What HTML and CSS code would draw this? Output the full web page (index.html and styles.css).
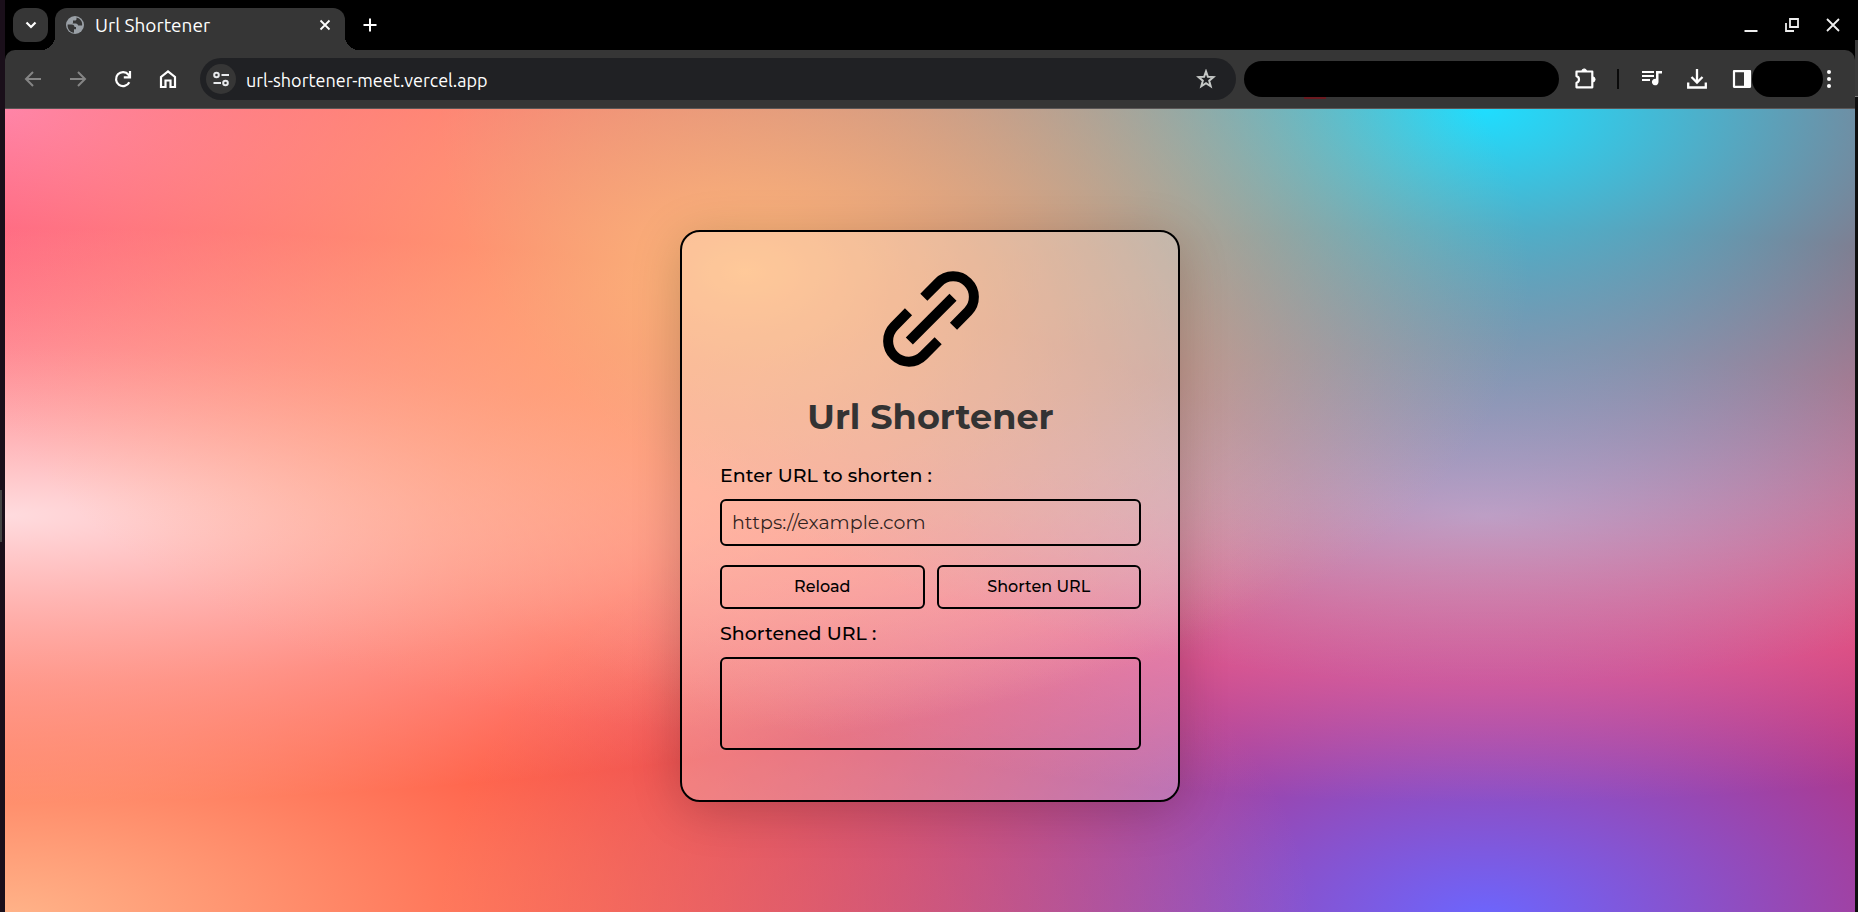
FILE: index.html
```
<!DOCTYPE html>
<html lang="en">
<head>
<meta charset="utf-8">
<title>Url Shortener</title>
<link rel="stylesheet" href="styles.css">
</head>
<body>
<div class="edge edge-left"></div>
<div class="window">
  <header class="tabstrip">
    <button class="tab-search" aria-label="Search tabs"><svg width="16" height="16" viewBox="0 0 16 16"><path d="M3.500 5.500 8 10l4.500-4.500" fill="none" stroke="#fff" stroke-width="2.200"/></svg></button>
    <div class="tab">
      <svg width="20" height="20" viewBox="0 0 20 20"><circle cx="10" cy="10" r="9" fill="#9aa0a6"/><path d="M2.600 9.500h4.200c1.800 0 2.700 1 2.700 2.500h1.500v2.200H9v3.500C5.200 17.500 2.200 14 2.600 9.500zM11.500 2.600V4c0 1-.8 1.600-1.800 1.600H8v1.800c0 .6-.5 1-1 1h3.800c1.500 0 2 1 2.400 2.200h3.900c.6-3.700-1.800-7.200-5.600-8z" fill="#363636"/></svg>
      <span class="tab-title">Url Shortener</span>
      <button class="icon" aria-label="Close tab"><svg width="16" height="16" viewBox="0 0 16 16"><path d="m3.500 3.500 9 9m0-9-9 9" stroke="#fff" stroke-width="1.800"/></svg></button>
    </div>
    <button class="icon new-tab" aria-label="New tab"><svg width="16" height="16" viewBox="0 0 16 16"><path d="M8 1.500v13M1.500 8h13" stroke="#fff" stroke-width="2"/></svg></button>
    <div class="controls">
      <button class="icon" aria-label="Minimize"><svg width="16" height="16" viewBox="0 0 16 16"><path d="M1.500 14h13" stroke="#eee" stroke-width="2"/></svg></button>
      <button class="icon" aria-label="Restore"><svg width="16" height="16" viewBox="0 0 16 16"><path d="M6 2h8v8H6zM2 6v8h8" fill="none" stroke="#eee" stroke-width="1.800"/></svg></button>
      <button class="icon" aria-label="Close window"><svg width="16" height="16" viewBox="0 0 16 16"><path d="m2 2 12 12m0-12L2 14" stroke="#eee" stroke-width="1.800"/></svg></button>
    </div>
  </header>
  <nav class="toolbar">
    <div class="nav-buttons">
      <button class="icon" aria-label="Back"><svg width="18" height="18" viewBox="0 0 18 18"><path d="M17 9H2.500M9 2 2 9l7 7" fill="none" stroke="#858585" stroke-width="2"/></svg></button>
      <button class="icon" aria-label="Forward"><svg width="18" height="18" viewBox="0 0 18 18"><path d="M1 9h14.500M9 2l7 7-7 7" fill="none" stroke="#858585" stroke-width="2"/></svg></button>
      <button class="icon" aria-label="Reload page"><svg width="18" height="18" viewBox="0 0 18 18"><path d="M15.300 12.200A7 7 0 1 1 14.500 4.700L16 6.500M16 1v6.300H9.800" fill="none" stroke="#fff" stroke-width="2.200"/></svg></button>
      <button class="icon" aria-label="Home"><svg width="18" height="20" viewBox="0 0 18 20"><path d="M2 8v10h4.500v-6.500h5V18H16V8L9 2.300z" fill="none" stroke="#fff" stroke-width="2.200"/></svg></button>
    </div>
    <div class="address">
      <button class="site-info" aria-label="Site information"><svg width="18" height="18" viewBox="0 0 18 18" fill="none" stroke="#e8eaed" stroke-width="2"><circle cx="4.500" cy="5" r="2.300"/><path d="M9.500 5H17M1.500 13H9"/><circle cx="13.500" cy="13" r="2.300"/></svg></button>
      <input class="url" type="text" aria-label="Address" value="url-shortener-meet.vercel.app">
      <button class="icon" aria-label="Bookmark"><svg width="20" height="20" viewBox="0 0 20 20"><path d="m10 2.400 1.900 5.400 5.600.3-4.300 3.600 1.500 5.600-4.700-3.100-4.700 3.100 1.500-5.600-4.300-3.600 5.600-.3z" fill="none" stroke="#c4c7c5" stroke-width="2"/></svg></button>
    </div>
    <div class="redacted extensions"></div>
    <button class="icon puzzle" aria-label="Extensions"><svg width="22" height="22" viewBox="0 0 22 22"><path d="M1.500 3.500h15.800v15.800H1.500v-4.600c3.300-1 3.300-5.600 0-6.600z" fill="none" stroke="#fff" stroke-width="2.200" stroke-linejoin="round"/><path d="M6.800 3.500a2.400 2.600 0 0 1 4.800 0zM17.500 8.800a2.600 2.600 0 0 1 0 5.200z" fill="#fff" stroke="#fff"/></svg></button>
    <span class="divider"></span>
    <div class="tools">
      <button class="icon" aria-label="Media controls"><svg width="20" height="20" viewBox="0 0 20 20"><path d="M0 3h12M0 7h12M0 11h8" stroke="#fff" stroke-width="2"/><path d="M14 2h6v2.400h-3.500V13a3.300 3.300 0 1 1-2.500-3.200z" fill="#fff"/></svg></button>
      <button class="icon" aria-label="Downloads"><svg width="20" height="20" viewBox="0 0 20 20"><path d="M10 0v13M4.500 8l5.500 5.500L15.500 8M1.200 13.500v5h17.600v-5" fill="none" stroke="#fff" stroke-width="2.300"/></svg></button>
      <button class="icon" aria-label="Side panel"><svg width="20" height="20" viewBox="0 0 20 20"><path d="M2 2.200h16v15.600H2z" fill="none" stroke="#fff" stroke-width="2.200" stroke-linejoin="round"/><path d="M12 2h6v16h-6z" fill="#fff"/></svg></button>
    </div>
    <div class="redacted profile"></div>
    <button class="icon" aria-label="Menu"><svg width="12" height="20" viewBox="0 0 12 20" fill="#fff"><circle cx="6" cy="3" r="2"/><circle cx="6" cy="10" r="2"/><circle cx="6" cy="17" r="2"/></svg></button>
  </nav>
  <main class="page">
    <form class="card">
      <svg class="logo" width="130" height="130" viewBox="15 12 390 390" fill="none" stroke="#000" stroke-width="30"><path d="M188.500 141.500 232.200 97.800A61.500 61.500 0 0 1 321 184.500L277.500 229M145 273 276 142M231.500 272.500 187.800 316.200A61.500 61.500 0 0 1 99 229.500L142.500 185"/></svg>
      <h1>Url Shortener</h1>
      <label for="long">Enter URL to shorten :</label>
      <input class="field" id="long" type="text" placeholder="https://example.com">
      <div class="actions">
        <button type="button">Reload</button>
        <button type="button">Shorten URL</button>
      </div>
      <label for="short">Shortened URL :</label>
      <output class="result" id="short"></output>
    </form>
  </main>
</div>
<div class="edge edge-right"></div>
</body>
</html>
```
FILE: styles.css
```
* { box-sizing: border-box; }

body {
  margin: 0;
  min-height: 100vh;
  display: grid;
  grid-template-columns: 5px 1fr 3px;
  background: #000;
  font-family: Ubuntu, "Noto Sans", sans-serif;
}

button, input { font: inherit; color: inherit; }
svg { display: block; }

.edge-left {
  background: linear-gradient(#444 0 0) 0 57% / 2px 52px no-repeat, #1a0f1a;
}
.edge-right {
  background: linear-gradient(transparent 40px, #3a3a3a 40px 96px, #777 96px 97px, #0e0e0e 97px);
}

.window {
  display: flex;
  flex-direction: column;
  min-width: 0;
}

.icon {
  padding: 0;
  border: 0;
  background: none;
  flex: none;
}

.tabstrip {
  display: flex;
  align-items: center;
  height: 50px;
  padding: 0 14px 0 8px;
}
.tab-search {
  width: 35px;
  height: 34px;
  display: grid;
  place-items: center;
  padding: 0;
  border: 0;
  border-radius: 12px;
  background: #363636;
}
.tab {
  position: relative;
  display: flex;
  align-items: center;
  align-self: flex-end;
  width: 290px;
  height: 42px;
  margin-left: 7px;
  padding: 0 12px 8px 10px;
  border-radius: 12px 12px 0 0;
  background: #363636;
  color: #fff;
}
.tab::before, .tab::after {
  content: "";
  position: absolute;
  bottom: 0;
  width: 14px;
  height: 14px;
}
.tab::before {
  right: 100%;
  background: radial-gradient(circle at 0 0, transparent 14px, #363636 14px);
}
.tab::after {
  left: 100%;
  background: radial-gradient(circle at 100% 0, transparent 14px, #363636 14px);
}
.tab-title {
  flex: 1;
  margin-left: 10px;
  font-size: 19px;
  line-height: 24px;
}
.new-tab { margin-left: 17px; }
.controls {
  display: flex;
  gap: 25px;
  margin-left: auto;
}

.toolbar {
  display: flex;
  align-items: center;
  height: 59px;
  padding: 0 20px 0 19px;
  border-radius: 10px 10px 0 0;
  border-bottom: 1px solid #5a5656;
  background: #363636;
}
.nav-buttons {
  display: flex;
  align-items: center;
  gap: 27px;
}
.address {
  flex: 1;
  display: flex;
  align-items: center;
  height: 42px;
  margin-left: 23px;
  padding: 0 20px 0 6px;
  border-radius: 21px;
  background: #202124;
}
.site-info {
  display: grid;
  place-items: center;
  width: 30px;
  height: 30px;
  padding: 0;
  border: 0;
  border-radius: 50%;
  background: #363636;
}
.url {
  flex: 1;
  min-width: 0;
  margin-left: 10px;
  padding: 2px 0 0;
  border: 0;
  background: none;
  color: #fff;
  font-size: 18px;
  line-height: 24px;
}
.redacted {
  height: 36px;
  border-radius: 18px;
  background: #000;
}
.extensions {
  position: relative;
  width: 315px;
  margin-left: 8px;
}
.extensions::after {
  content: "";
  position: absolute;
  top: 100%;
  left: 60px;
  width: 22px;
  height: 2px;
  background: #6b1a20;
}
.puzzle { margin-left: 16px; }
.divider {
  width: 2px;
  height: 20px;
  margin: 0 23px 0 20px;
  background: #0a0a0a;
}
.tools {
  display: flex;
  gap: 25px;
}
.profile { width: 71px; }

.page {
  flex: 1;
  display: grid;
  place-items: center;
  padding-top: 10px;
  background-color: #f00;
  background-image:
    radial-gradient(at 40% 20%, hsl(28 100% 74%) 0, transparent 50%),
    radial-gradient(at 80% 0%, hsl(189 100% 56%) 0, transparent 50%),
    radial-gradient(at 0% 50%, hsl(355 100% 93%) 0, transparent 50%),
    radial-gradient(at 80% 50%, hsl(340 100% 76%) 0, transparent 50%),
    radial-gradient(at 0% 100%, hsl(22 100% 77%) 0, transparent 50%),
    radial-gradient(at 80% 100%, hsl(242 100% 70%) 0, transparent 50%),
    radial-gradient(at 0% 0%, hsl(343 100% 76%) 0, transparent 50%);
  background-size: 100% calc(100% + 10px);
  font-family: Montserrat, Inter, sans-serif;
}

.card {
  display: flex;
  flex-direction: column;
  width: 500px;
  max-width: 100%;
  padding: 22px 37px 50px 38px;
  border: 2px solid #000;
  border-radius: 20px;
  background: rgb(255 255 255 / 24%);
  box-shadow: 0 8px 50px rgb(0 0 0 / 20%);
  color: #000;
}
.logo { align-self: center; }
h1 {
  margin: 10px 0 0;
  color: #333;
  font-size: 35px;
  line-height: 46px;
  text-align: center;
}
label {
  font-size: 19px;
  font-weight: 500;
  line-height: 24px;
}
h1 + label { margin-top: 24px; }
.field {
  width: 100%;
  height: 47px;
  margin-top: 11px;
  padding: 0 10px;
  border: 2px solid #000;
  border-radius: 6px;
  background: none;
  font-size: 19px;
}
.field::placeholder { color: rgb(0 0 0 / 82%); opacity: 1; }
.actions {
  display: grid;
  grid-template-columns: 1fr 1fr;
  gap: 12px;
  margin: 19px 0 13px;
}
.actions button {
  height: 44px;
  padding: 0;
  border: 2px solid #000;
  border-radius: 6px;
  background: none;
  font-size: 16px;
  font-weight: 500;
}
.result {
  height: 93px;
  margin-top: 11px;
  border: 2px solid #000;
  border-radius: 6px;
}
```
